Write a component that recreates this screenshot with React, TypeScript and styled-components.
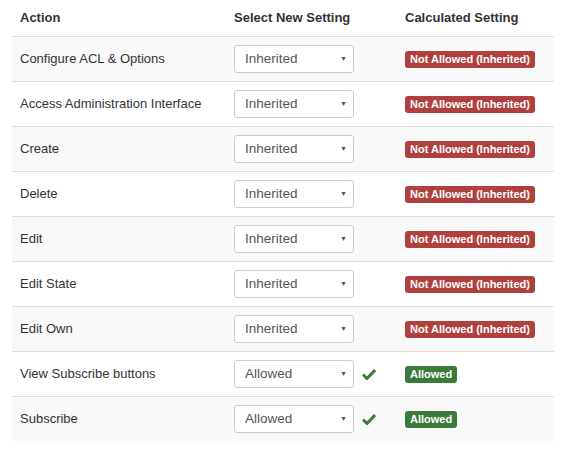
import React from 'react'
import styled, { createGlobalStyle } from 'styled-components'

const GlobalStyle = createGlobalStyle`
    body {
        margin: 0;
        background: #fff;
        font-family: 'Liberation Sans', Arial, sans-serif;
        font-size: 13px;
        color: #333;
    }
`

const Wrapper = styled.div`
    padding: 0 12px;
    width: 542px;
`

const Table = styled.table`
    width: 100%;
    border-collapse: collapse;
    border-spacing: 0;
`

const HeadCell = styled.th<{ width?: number }>`
    text-align: left;
    font-weight: bold;
    padding: 8px;
    line-height: 20px;
    border-bottom: 1px solid #ddd;
    width: ${(props) => (props.width ? `${props.width}px` : 'auto')};
`

const Row = styled.tr<{ striped: boolean }>`
    background: ${(props) => (props.striped ? '#f9f9f9' : '#fff')};
    border-bottom: 1px solid #ddd;

    &:last-child {
        border-bottom: none;
    }
`

const Cell = styled.td`
    padding: 8px;
    line-height: 20px;
    vertical-align: middle;
`

const SelectWrap = styled.div`
    display: flex;
    align-items: center;
    gap: 8px;
`

const FakeSelect = styled.div`
    width: 120px;
    height: 28px;
    box-sizing: border-box;
    border: 1px solid #ccc;
    border-radius: 3px;
    background: #fff;
    display: flex;
    align-items: center;
    justify-content: space-between;
    padding: 0 6px 0 10px;
    color: #555;
    font-size: 13.5px;
`

const Arrow = styled.span`
    font-size: 7px;
    color: #555;
`

const Badge = styled.span<{ tone: 'danger' | 'success' }>`
    display: inline-block;
    background: ${(props) => (props.tone === 'danger' ? '#b0403e' : '#3b7a3b')};
    color: #fff;
    font-weight: bold;
    font-size: 11px;
    line-height: 13px;
    padding: 2px 5px;
    border-radius: 3px;
    white-space: nowrap;
`

const Check = () => (
    <svg width="14" height="12" viewBox="0 0 14 12">
        <path d="M1 6.5 L5 10.5 L13 2" fill="none" stroke="#3c7a3c" strokeWidth="3" />
    </svg>
)

type Perm = { action: string; value: 'Inherited' | 'Allowed' }

const rows: Perm[] = [
    { action: 'Configure ACL & Options', value: 'Inherited' },
    { action: 'Access Administration Interface', value: 'Inherited' },
    { action: 'Create', value: 'Inherited' },
    { action: 'Delete', value: 'Inherited' },
    { action: 'Edit', value: 'Inherited' },
    { action: 'Edit State', value: 'Inherited' },
    { action: 'Edit Own', value: 'Inherited' },
    { action: 'View Subscribe buttons', value: 'Allowed' },
    { action: 'Subscribe', value: 'Allowed' },
]

export default function App() {
    return (
        <>
            <GlobalStyle />
            <Wrapper>
                <Table>
                    <thead>
                        <tr>
                            <HeadCell width={198}>Action</HeadCell>
                            <HeadCell width={155}>Select New Setting</HeadCell>
                            <HeadCell>Calculated Setting</HeadCell>
                        </tr>
                    </thead>
                    <tbody>
                        {rows.map((r, i) => (
                            <Row key={r.action} striped={i % 2 === 0}>
                                <Cell>{r.action}</Cell>
                                <Cell>
                                    <SelectWrap>
                                        <FakeSelect>
                                            {r.value}
                                            <Arrow>▼</Arrow>
                                        </FakeSelect>
                                        {r.value === 'Allowed' && <Check />}
                                    </SelectWrap>
                                </Cell>
                                <Cell>
                                    {r.value === 'Allowed' ? (
                                        <Badge tone="success">Allowed</Badge>
                                    ) : (
                                        <Badge tone="danger">Not Allowed (Inherited)</Badge>
                                    )}
                                </Cell>
                            </Row>
                        ))}
                    </tbody>
                </Table>
            </Wrapper>
        </>
    )
}
